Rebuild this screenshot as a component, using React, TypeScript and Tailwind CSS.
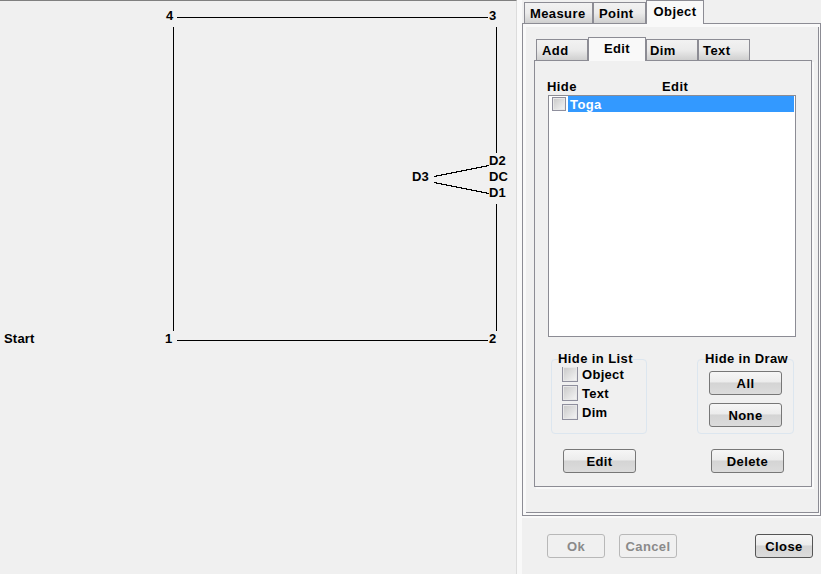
const font = { fontFamily: '"Liberation Sans", Arial, sans-serif' };

function Cb({ small = false }: { small?: boolean }) {
  return (
    <span
      className={`block shrink-0 ${small ? "w-[14px] h-[14px]" : "w-[16px] h-[16px]"} border border-[#8f8f9d] bg-gradient-to-br from-[#c8c8c8] to-[#f6f6f6] shadow-[inset_0_0_0_1px_#e8e8e8]`}
    />
  );
}

function Btn({ label, w = "w-[73px]", disabled = false, dark = false }: { label: string; w?: string; disabled?: boolean; dark?: boolean }) {
  return (
    <div
      className={`${w} h-6 shrink-0 flex items-center justify-center rounded-[3px] border pt-[2px] text-[13px] font-bold tracking-[0.4px] ${
        disabled
          ? "border-[#b8b8b8] bg-[#f0f0f0] text-[#8a8a8a]"
          : `${dark ? "border-[#555555]" : "border-[#777777]"} bg-[linear-gradient(#f6f6f6_0%,#ececec_45%,#d4d4d4_50%,#dcdcdc_100%)] text-black`
      }`}
    >
      {label}
    </div>
  );
}

function Tab({ label, w, active = false, pl = "pl-[5px]" }: { label: string; w: string; active?: boolean; pl?: string }) {
  return active ? (
    <div className={`${w} h-[24px] -mb-px relative z-10 bg-[#f9f9f9] border border-b-0 border-[#8c8c94] text-center text-[13px] font-bold tracking-[0.4px] leading-[16px] pt-[3px] text-black`}>
      {label}
    </div>
  ) : (
    <div className={`${w} h-[21px] ${pl} border border-b-0 border-[#8c8c94] bg-[linear-gradient(#f2f2f2_0%,#ebebeb_50%,#cfcfcf_100%)] text-[13px] font-bold tracking-[0.4px] leading-[16px] pt-[3px] text-black`}>
      {label}
    </div>
  );
}

function Node({ text, x, y }: { text: string; x: number; y: number }) {
  return (
    <span className="absolute text-[13px] font-bold tracking-[0.2px] leading-[14px] text-black" style={{ left: x, top: y }}>
      {text}
    </span>
  );
}

export default function App() {
  return (
    <div className="w-[821px] h-[574px] relative overflow-hidden bg-[#f0f0f0] flex" style={font}>
      {/* drawing canvas */}
      <div className="relative w-[517px] h-full border-t border-r border-t-[#808080] border-r-[#dcdcdc] shrink-0">
        <svg className="absolute left-0 top-[-1px]" width="516" height="574" shapeRendering="crispEdges">
          <g stroke="#000" strokeWidth="1" fill="none">
            <line x1="173.5" y1="27" x2="173.5" y2="331" />
            <line x1="177" y1="17.5" x2="488" y2="17.5" />
            <line x1="496.5" y1="27" x2="496.5" y2="153" />
            <line x1="496.5" y1="204" x2="496.5" y2="331" />
            <line x1="177" y1="340.5" x2="488" y2="340.5" />
            <line x1="434" y1="176.5" x2="489" y2="165.5" />
            <line x1="434" y1="182.5" x2="489" y2="193.5" />
          </g>
        </svg>
        <Node text="4" x={166} y={8} />
        <Node text="3" x={489} y={8} />
        <Node text="1" x={165} y={331} />
        <Node text="2" x={489} y={331} />
        <Node text="Start" x={4} y={331} />
        <Node text="D3" x={412} y={169} />
        <Node text="D2" x={489} y={153} />
        <Node text="DC" x={489} y={169} />
        <Node text="D1" x={489} y={185} />
      </div>

      {/* right side */}
      <div className="w-[304px] h-full shrink-0 bg-[#f9f9f9] pl-[5px]">
        <div className="w-[299px] h-full bg-[#f0f0f0] flex flex-col">
          <div className="flex items-end h-[23px] pl-[2px] shrink-0">
            <Tab label="Measure" w="w-[69px]" />
            <Tab label="Point" w="w-[53px]" />
            <Tab label="Object" w="w-[58px]" active />
          </div>
          <div className="w-[299px] h-[493px] shrink-0 border border-[#8c8c94] bg-[#f9f9f9] pl-[3px] pt-[3px]">
            <div className="w-[293px] h-[486px] border-r border-b border-[#8c8c94] bg-[#f0f0f0] pl-[8px] pt-[10px]">
              <div className="flex items-end h-[23px] pl-[2px]">
                <Tab label="Add" w="w-[52px]" />
                <Tab label="Edit" w="w-[58px]" active />
                <Tab label="Dim" w="w-[52px]" pl="pl-[3px]" />
                <Tab label="Text" w="w-[52px]" pl="pl-[4px]" />
              </div>
              <div className="w-[278px] h-[427px] border border-[#8c8c94] pl-[12px] pt-[18px] shadow-[2px_2px_0_#f9f9f9]">
                <div className="flex h-[16px] text-[13px] font-bold tracking-[0.4px] leading-[16px] text-black">
                  <span className="w-[115px]">Hide</span>
                  <span>Edit</span>
                </div>
                <div className="ml-px w-[248px] h-[242px] bg-white border border-[#8c8c94] pl-[3px] pr-px">
                  <div className="flex items-center gap-[2px] h-[16px]">
                    <Cb small />
                    <div className="flex-1 h-[16px] bg-[#3399ff] text-white text-[13px] font-bold tracking-[0.4px] pl-[2px] leading-[18px]">Toga</div>
                  </div>
                </div>
                <div className="flex justify-between w-[243px] ml-[4px] mt-[22px]">
                  <div className="relative w-[96px] h-[75px] border border-[#dce6ef] rounded-[4px] pl-[10px] pt-[6px]">
                    <span className="absolute left-[6px] -top-[9px] bg-[#f0f0f0] text-[13px] font-bold tracking-[0.4px] leading-[16px] text-black whitespace-nowrap">Hide in List</span>
                    <div className="flex flex-col gap-[3px]">
                      {["Object", "Text", "Dim"].map((t) => (
                        <div key={t} className="flex items-center gap-[4px] h-[16px] text-[13px] font-bold tracking-[0.3px] text-black">
                          <Cb />
                          <span className="pt-[2px]">{t}</span>
                        </div>
                      ))}
                    </div>
                  </div>
                  <div className="relative w-[97px] h-[75px] border border-[#dce6ef] rounded-[4px] pl-[11px] pt-[11px]">
                    <span className="absolute left-[7px] -top-[9px] bg-[#f0f0f0] text-[13px] font-bold tracking-[0.35px] leading-[16px] text-black whitespace-nowrap">Hide in Draw</span>
                    <div className="flex flex-col gap-[8px]">
                      <Btn label="All" />
                      <Btn label="None" />
                    </div>
                  </div>
                </div>
                <div className="flex justify-between w-[221px] ml-[16px] mt-[15px]">
                  <Btn label="Edit" />
                  <Btn label="Delete" />
                </div>
              </div>
            </div>
          </div>
          <div className="h-[2px] bg-[#f9f9f9] shrink-0" />
          <div className="flex pl-[25px] pt-[16px]">
            <Btn label="Ok" w="w-[58px]" disabled />
            <div className="w-[14px]" />
            <Btn label="Cancel" w="w-[58px]" disabled />
            <div className="w-[78px]" />
            <Btn label="Close" w="w-[58px]" dark />
          </div>
        </div>
      </div>
    </div>
  );
}
